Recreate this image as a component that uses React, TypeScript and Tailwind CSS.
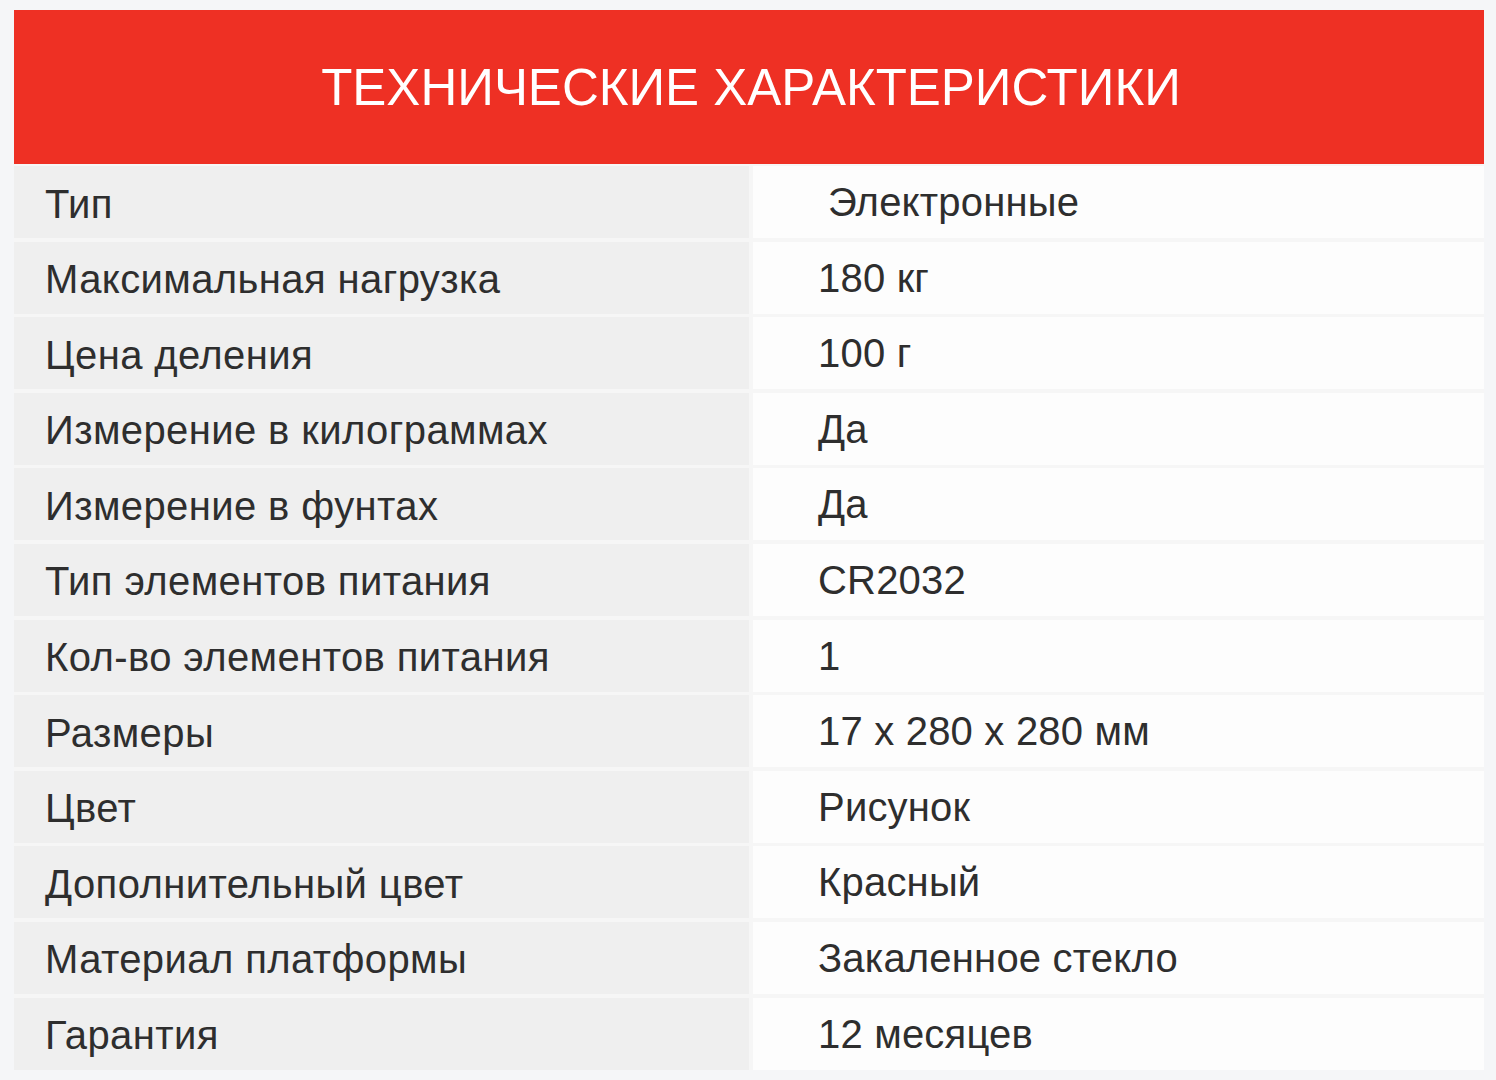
import React from 'react'

const specs: { label: string; value: string; indent?: boolean }[] = [
  { label: 'Тип', value: 'Электронные', indent: true },
  { label: 'Максимальная нагрузка', value: '180 кг' },
  { label: 'Цена деления', value: '100 г' },
  { label: 'Измерение в килограммах', value: 'Да' },
  { label: 'Измерение в фунтах', value: 'Да' },
  { label: 'Тип элементов питания', value: 'CR2032' },
  { label: 'Кол-во элементов питания', value: '1' },
  { label: 'Размеры', value: '17 x 280 x 280 мм' },
  { label: 'Цвет', value: 'Рисунок' },
  { label: 'Дополнительный цвет', value: 'Красный' },
  { label: 'Материал платформы', value: 'Закаленное стекло' },
  { label: 'Гарантия', value: '12 месяцев' },
]

export default function App() {
  return (
    <div
      className="min-h-screen w-full bg-[#f5f6f8] pt-[10px] pl-[14px]"
      style={{ fontFamily: '"Liberation Sans", Arial, sans-serif' }}
    >
      <div className="w-[1470px] bg-[#f6f6f6]">
        {/* Заголовок */}
        <div className="h-[154px] bg-[#ee3024] flex items-center justify-center">
          <h1 className="text-[51px] leading-none text-white pl-[4px]">
            ТЕХНИЧЕСКИЕ ХАРАКТЕРИСТИКИ
          </h1>
        </div>

        {/* Таблица */}
        <div className="flex flex-col gap-[3.6px] pt-[2px]">
          {specs.map((row) => (
            <div key={row.label} className="flex gap-[4px] h-[72px]">
              <div className="w-[735px] bg-[#efefef] flex items-center pl-[31px] pt-[3px]">
                <span className="text-[40px] leading-none tracking-[0.4px] text-[#2e2e2e]">
                  {row.label}
                </span>
              </div>
              <div className="flex-1 bg-[#fdfdfd] flex items-center pl-[65px]">
                <span
                  className={
                    row.indent
                      ? 'pl-[10px] text-[40px] leading-none tracking-[0.2px] text-[#2e2e2e]'
                      : 'text-[40px] leading-none tracking-[0.2px] text-[#2e2e2e]'
                  }
                >
                  {row.value}
                </span>
              </div>
            </div>
          ))}
        </div>
      </div>
    </div>
  )
}
